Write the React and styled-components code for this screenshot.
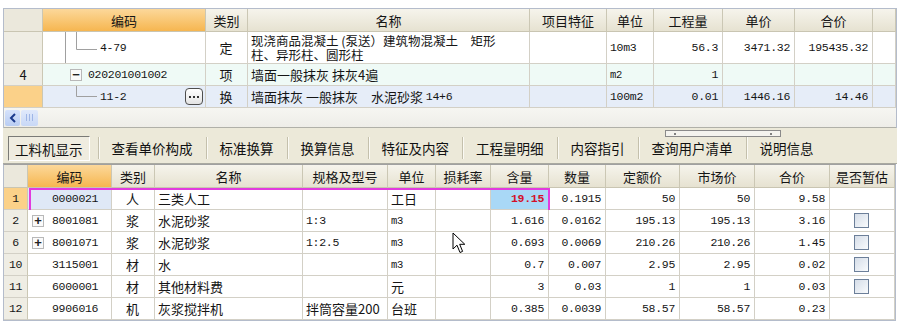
import React from "react";
import styled, { createGlobalStyle } from "styled-components";

const GlobalStyle = createGlobalStyle`
  html, body { margin: 0; padding: 0; background: #fff; }
  body {
    font-family: "Noto Sans CJK SC", "Liberation Sans", sans-serif;
    font-size: 13px;
    color: #151515;
  }
  * { box-sizing: border-box; }
`;

const TOP_COLS = "39px 163px 42px 282px 77px 47px 69px 72px 78px 23px";
const BOTTOM_COLS =
  "24px 84px 43px 148px 85px 48px 55px 58px 57px 74px 75px 75px 65px";

const ALIGN = { left: "flex-start", center: "center", right: "flex-end" };

// ascii values go in the narrow mono face, chinese stays in the normal font
const isAscii = (s) => /^[\x00-\x7f]*$/.test(s);
const Text = ({ v, small }) =>
  isAscii(v) ? <Mono $small={small}>{v}</Mono> : <>{v}</>;

export default function App() {
  return (
    <>
      <GlobalStyle />
      <Page>
        <TopPanel>
          <Row $cols={TOP_COLS} $h={23}>
            <HeadCell $kind="num" />
            <HeadCell $kind="active">编码</HeadCell>
            <HeadCell>类别</HeadCell>
            <HeadCell>名称</HeadCell>
            <HeadCell>项目特征</HeadCell>
            <HeadCell>单位</HeadCell>
            <HeadCell>工程量</HeadCell>
            <HeadCell>单价</HeadCell>
            <HeadCell>合价</HeadCell>
            <HeadCell />
          </Row>

          {/* 定额 4-79 */}
          <Row $cols={TOP_COLS} $h={32}>
            <NumCell />
            <CodeCell $pad={57}>
              <Tree width="60" height="32">
                <line x1="22.5" y1="0" x2="22.5" y2="32" />
                <polyline points="33.5,0 33.5,17.5 54,17.5" />
              </Tree>
              <Mono>4-79</Mono>
            </CodeCell>
            <Cell $align="center">定</Cell>
            <Cell $wrap>
              <Line>现浇商品混凝土 (泵送）建筑物混凝土　矩形</Line>
              <Line>柱、异形柱、圆形柱</Line>
            </Cell>
            <Cell />
            <Cell><Mono>10m3</Mono></Cell>
            <Cell $align="right"><Mono>56.3</Mono></Cell>
            <Cell $align="right"><Mono>3471.32</Mono></Cell>
            <Cell $align="right"><Mono>195435.32</Mono></Cell>
            <Cell />
          </Row>

          {/* 清单项 */}
          <Row $cols={TOP_COLS} $h={22} $bg="#effaf6">
            <NumCell>4</NumCell>
            <CodeCell $pad={45}>
              <Toggle $left={27}>−</Toggle>
              <Mono>020201001002</Mono>
            </CodeCell>
            <Cell $align="center">项</Cell>
            <Cell>墙面一般抹灰 抹灰4遍</Cell>
            <Cell />
            <Cell><Mono $small>m2</Mono></Cell>
            <Cell $align="right"><Mono>1</Mono></Cell>
            <Cell />
            <Cell />
            <Cell />
          </Row>

          <Row $cols={TOP_COLS} $h={22} $bg="#e6edf8">
            <NumCell $current />
            <CodeCell $pad={57}>
              <Tree width="60" height="22">
                <polyline points="33.5,0 33.5,10.5 54,10.5" />
              </Tree>
              <Mono>11-2</Mono>
              <MoreButton>
                <svg width="10" height="4" viewBox="0 0 10 4">
                  <rect x="0" y="1" width="2" height="2" fill="#333" />
                  <rect x="4" y="1" width="2" height="2" fill="#333" />
                  <rect x="8" y="1" width="2" height="2" fill="#333" />
                </svg>
              </MoreButton>
            </CodeCell>
            <Cell $align="center">换</Cell>
            <Cell>墙面抹灰 一般抹灰　水泥砂浆&nbsp;<Mono>14+6</Mono></Cell>
            <Cell />
            <Cell><Mono>100m2</Mono></Cell>
            <Cell $align="right"><Mono>0.01</Mono></Cell>
            <Cell $align="right"><Mono>1446.16</Mono></Cell>
            <Cell $align="right"><Mono>14.46</Mono></Cell>
            <Cell />
          </Row>

          <ScrollArea>
            <ScrollButton>
              <svg width="8" height="10" viewBox="0 0 8 10">
                <polyline
                  points="6,1 2,5 6,9"
                  fill="none"
                  stroke="#1b3a8c"
                  strokeWidth="2"
                />
              </svg>
            </ScrollButton>
            <ScrollThumb>
              <span />
              <span />
              <span />
            </ScrollThumb>
          </ScrollArea>
        </TopPanel>

        <TabBar>
          <Grip>
            <i />
            <i />
          </Grip>
          {TABS.map((t, i) => (
            <Tab key={t} $active={i === 0}>
              {t}
            </Tab>
          ))}
        </TabBar>

        <BottomPanel>
          <Row $cols={BOTTOM_COLS} $h={23}>
            <HeadCell $kind="num" />
            <HeadCell $kind="active">编码</HeadCell>
            <HeadCell>类别</HeadCell>
            <HeadCell>名称</HeadCell>
            <HeadCell>规格及型号</HeadCell>
            <HeadCell>单位</HeadCell>
            <HeadCell>损耗率</HeadCell>
            <HeadCell>含量</HeadCell>
            <HeadCell>数量</HeadCell>
            <HeadCell>定额价</HeadCell>
            <HeadCell>市场价</HeadCell>
            <HeadCell>合价</HeadCell>
            <HeadCell>是否暂估</HeadCell>
          </Row>
          {ITEMS.map((r, i) => (
            <Row key={r.code} $cols={BOTTOM_COLS} $h={22}>
              <NumCell $current={i === 0}>
                <Mono>{r.n}</Mono>
              </NumCell>
              <CodeCell $pad={24} $bg={i === 0 ? "#dfe8f6" : undefined}>
                {r.plus && <Toggle $left={4}>+</Toggle>}
                <Mono>{r.code}</Mono>
              </CodeCell>
              <Cell $align="center">{r.type}</Cell>
              <Cell>{r.name}</Cell>
              <Cell>
                <Text v={r.spec} />
              </Cell>
              <Cell>
                <Text v={r.unit} small />
              </Cell>
              <Cell />
              <Cell $align="right" $bg={i === 0 ? "#a9d8f6" : undefined}>
                <Mono $hot={i === 0}>{r.content}</Mono>
              </Cell>
              <Cell $align="right"><Mono>{r.qty}</Mono></Cell>
              <Cell $align="right"><Mono>{r.quota}</Mono></Cell>
              <Cell $align="right"><Mono>{r.market}</Mono></Cell>
              <Cell $align="right"><Mono>{r.total}</Mono></Cell>
              <Cell $align="center">{r.check && <Check />}</Cell>
              {i === 0 && <Highlight />}
            </Row>
          ))}
        </BottomPanel>

        <Cursor width="14" height="22" viewBox="0 0 14 22">
          <path
            d="M1 1 L1 17 L5 13.2 L8 20.5 L10.6 19.4 L7.7 12.3 L12.8 12.3 Z"
            fill="#fff"
            stroke="#000"
            strokeWidth="1"
            strokeLinejoin="round"
          />
        </Cursor>
      </Page>
    </>
  );
}

const TABS = [
  "工料机显示",
  "查看单价构成",
  "标准换算",
  "换算信息",
  "特征及内容",
  "工程量明细",
  "内容指引",
  "查询用户清单",
  "说明信息",
];

const ITEMS = [
  { n: "1", code: "0000021", type: "人", name: "三类人工", spec: "", unit: "工日", content: "19.15", qty: "0.1915", quota: "50", market: "50", total: "9.58" },
  { n: "2", code: "8001081", plus: true, type: "浆", name: "水泥砂浆", spec: "1:3", unit: "m3", content: "1.616", qty: "0.0162", quota: "195.13", market: "195.13", total: "3.16", check: true },
  { n: "6", code: "8001071", plus: true, type: "浆", name: "水泥砂浆", spec: "1:2.5", unit: "m3", content: "0.693", qty: "0.0069", quota: "210.26", market: "210.26", total: "1.45", check: true },
  { n: "10", code: "3115001", type: "材", name: "水", spec: "", unit: "m3", content: "0.7", qty: "0.007", quota: "2.95", market: "2.95", total: "0.02", check: true },
  { n: "11", code: "6000001", type: "材", name: "其他材料费", spec: "", unit: "元", content: "3", qty: "0.03", quota: "1", market: "1", total: "0.03", check: true },
  { n: "12", code: "9906016", type: "机", name: "灰浆搅拌机", spec: "拌筒容量200", unit: "台班", content: "0.385", qty: "0.0039", quota: "58.57", market: "58.57", total: "0.23" },
];

const Page = styled.div`
  position: relative;
  width: 897px;
  padding: 8px 0 0 3px;
`;

const TopPanel = styled.div`
  width: 894px;
  border: 1px solid #b4bccb;
  border-bottom: none;
  background: #fff;
`;

const Row = styled.div`
  position: relative;
  display: grid;
  grid-template-columns: ${(p) => p.$cols};
  height: ${(p) => p.$h}px;
  background: ${(p) => p.$bg || "#fff"};
`;

const Cell = styled.div`
  position: relative;
  display: flex;
  flex-direction: ${(p) => (p.$wrap ? "column" : "row")};
  align-items: ${(p) => (p.$wrap ? "stretch" : "center")};
  justify-content: ${(p) => (p.$wrap ? "center" : ALIGN[p.$align || "left"])};
  padding: 0 4px 0 3px;
  border-right: 1px solid #d3d0c6;
  border-bottom: 1px solid #d3d0c6;
  background: ${(p) => p.$bg || "transparent"};
  white-space: nowrap;
  overflow: ${(p) => (p.$wrap ? "visible" : "hidden")};
`;

const Line = styled.div`
  line-height: 14px;
  font-size: 12.5px;
`;

const HeadCell = styled(Cell)`
  justify-content: center;
  padding: 0;
  border-right-color: #cbc7b4;
  border-bottom-color: #c9c5b2;
  background: ${(p) =>
    p.$kind === "active"
      ? "linear-gradient(#fcd89a, #f6b650)"
      : p.$kind === "num"
      ? "#ebe8dc"
      : "linear-gradient(#f6f4ec, #e6e2d1)"};
`;

const NumCell = styled(Cell)`
  justify-content: center;
  padding: 0;
  border-right-color: #cbc7b4;
  background: ${(p) => (p.$current ? "#fbd189" : "#efede4")};
`;

const CodeCell = styled(Cell)`
  padding-left: ${(p) => p.$pad}px;
`;

const Mono = styled.span`
  font-family: "Liberation Mono", "DejaVu Sans Mono", monospace;
  font-size: ${(p) => (p.$small ? "10.5px" : "11.5px")};
  font-weight: ${(p) => (p.$hot ? 700 : 400)};
  color: ${(p) => (p.$hot ? "#d3102a" : "#151515")};
  letter-spacing: -0.3px;
`;

const Tree = styled.svg`
  position: absolute;
  left: 0;
  top: 0;
  pointer-events: none;
  stroke: #a0a0a0;
  fill: none;
  stroke-width: 1;
`;

const Toggle = styled.span`
  position: absolute;
  left: ${(p) => p.$left}px;
  top: 50%;
  width: 12px;
  height: 12px;
  margin-top: -6px;
  display: flex;
  align-items: center;
  justify-content: center;
  border: 1px solid #b8b8b8;
  background: #fafafa;
  font-family: "Liberation Sans", sans-serif;
  font-size: 13px;
  font-weight: 700;
  line-height: 1;
  color: #222;
`;

const MoreButton = styled.span`
  position: absolute;
  right: 2px;
  top: 2px;
  width: 18px;
  height: 17px;
  display: flex;
  align-items: center;
  justify-content: center;
  border: 1px solid #4e4e4e;
  border-radius: 4px;
  background: linear-gradient(#ffffff, #e4e4e4);
`;

const ScrollArea = styled.div`
  display: flex;
  align-items: center;
  gap: 1px;
  height: 20px;
  padding-left: 1px;
  background: linear-gradient(#f6f6f2, #eeede8);
  border-bottom: 1px solid #b0b0a8;
`;

const ScrollButton = styled.div`
  width: 15px;
  height: 16px;
  display: flex;
  align-items: center;
  justify-content: center;
  border-radius: 2px;
  background: linear-gradient(#d6e2fb, #b9cdf3);
`;

const ScrollThumb = styled.div`
  width: 17px;
  height: 16px;
  display: flex;
  align-items: center;
  justify-content: center;
  gap: 2px;
  border-radius: 2px;
  background: linear-gradient(#e0e9fb, #c8d8f6);

  span {
    width: 1px;
    height: 7px;
    background: #9fb6e6;
  }
`;

const TabBar = styled.div`
  position: relative;
  display: flex;
  align-items: flex-end;
  width: 894px;
  height: 36px;
  padding: 0 0 2px 5px;
  background: #ece9d9;
  border-bottom: 1px solid #a9a9a0;
`;

const Grip = styled.div`
  position: absolute;
  left: 662px;
  top: 2px;
  width: 116px;
  height: 7px;
  display: flex;
  align-items: center;
  justify-content: space-between;
  padding: 0 8px;
  border: 1px solid #8a8a8a;
  background: #f4f3ee;

  i {
    width: 2px;
    height: 2px;
    background: #808080;
  }
`;

const Tab = styled.div`
  height: 25px;
  display: flex;
  align-items: center;
  font-size: 13.5px;
  color: #111;
  padding: ${(p) => (p.$active ? "0 6px" : "0 13px")};
  margin-right: ${(p) => (p.$active ? "8px" : "0")};
  border: ${(p) => (p.$active ? "1px solid" : "none")};
  border-color: #7a7a76 #ffffff #ffffff #7a7a76;
  background: ${(p) => (p.$active ? "#efece0" : "transparent")};

  & + & {
    border-left: 1px solid #c4c0ac;
    box-shadow: inset 1px 0 0 #fbfaf4;
    height: 22px;
    margin-bottom: 2px;
  }
`;

const BottomPanel = styled.div`
  width: 893px;
  border: 1px solid #b4bccb;
  border-top: 1px solid #a0a0a0;
  background: #fff;
`;

const Check = styled.span`
  width: 15px;
  height: 15px;
  border: 1px solid #6c7f99;
  background: linear-gradient(135deg, #d5dde8, #f9fbfd);
`;

const Highlight = styled.span`
  position: absolute;
  left: 25px;
  top: 0;
  width: 521px;
  height: 25px;
  border: 2px solid #e23ade;
  pointer-events: none;
`;

const Cursor = styled.svg`
  position: absolute;
  left: 452px;
  top: 232px;
  pointer-events: none;
`;
